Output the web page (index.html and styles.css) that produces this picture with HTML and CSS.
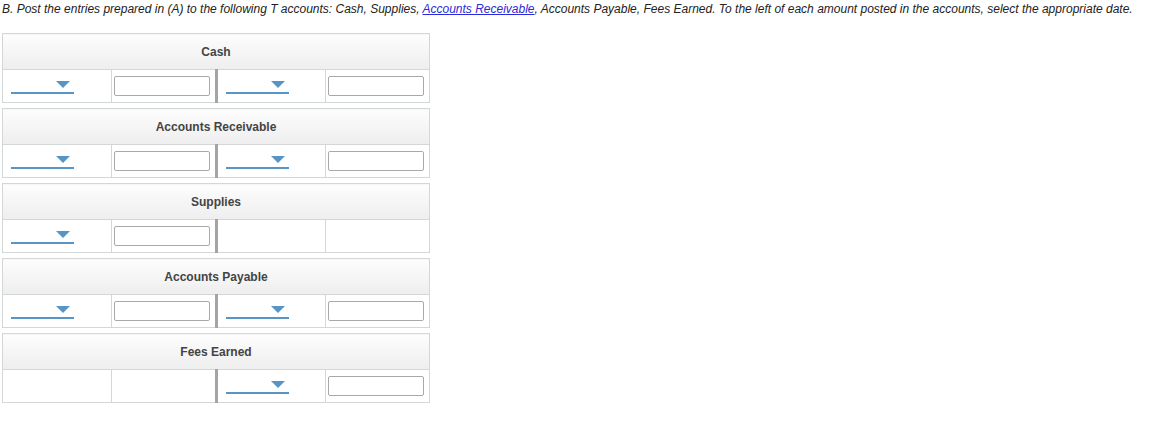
FILE: index.html
```html
<!DOCTYPE html>
<html lang="en">
  <head>
    <meta charset="UTF-8" />
    <title>T accounts</title>
    <link rel="stylesheet" href="styles.css">
  </head>
  <body>
    <p class="prompt">
      B. Post the entries prepared in (A) to the following T accounts: Cash, Supplies, <a href="#">Accounts Receivable</a>, Accounts Payable, Fees Earned. To the left of each amount posted in the accounts, select the appropriate date.
    </p>

    <table class="t-account">
      <colgroup><col class="c1"><col class="c2"><col class="c3"><col class="c4"></colgroup>
      <tr><th colspan="4">Cash</th></tr>
      <tr>
        <td><span class="select"></span></td>
        <td class="debit"><span class="field"></span></td>
        <td><span class="select"></span></td>
        <td><span class="field"></span></td>
      </tr>
    </table>

    <table class="t-account">
      <colgroup><col class="c1"><col class="c2"><col class="c3"><col class="c4"></colgroup>
      <tr><th colspan="4">Accounts Receivable</th></tr>
      <tr>
        <td><span class="select"></span></td>
        <td class="debit"><span class="field"></span></td>
        <td><span class="select"></span></td>
        <td><span class="field"></span></td>
      </tr>
    </table>

    <table class="t-account">
      <colgroup><col class="c1"><col class="c2"><col class="c3"><col class="c4"></colgroup>
      <tr><th colspan="4">Supplies</th></tr>
      <tr>
        <td><span class="select"></span></td>
        <td class="debit"><span class="field"></span></td>
        <td></td>
        <td></td>
      </tr>
    </table>

    <table class="t-account">
      <colgroup><col class="c1"><col class="c2"><col class="c3"><col class="c4"></colgroup>
      <tr><th colspan="4">Accounts Payable</th></tr>
      <tr>
        <td><span class="select"></span></td>
        <td class="debit"><span class="field"></span></td>
        <td><span class="select"></span></td>
        <td><span class="field"></span></td>
      </tr>
    </table>

    <table class="t-account">
      <colgroup><col class="c1"><col class="c2"><col class="c3"><col class="c4"></colgroup>
      <tr><th colspan="4">Fees Earned</th></tr>
      <tr>
        <td></td>
        <td class="debit"></td>
        <td><span class="select"></span></td>
        <td><span class="field"></span></td>
      </tr>
    </table>
  </body>
</html>
```

FILE: styles.css
```css
html, body {
  margin: 0;
  padding: 0;
}
body {
  padding: 3px 2px;
  font-family: 'Liberation Sans', Arial, sans-serif;
  color: #222;
  background: #fff;
}

.prompt {
  margin: 0 0 17px 0;
  font-size: 12px;
  font-style: italic;
  line-height: 13px;
  white-space: nowrap;
}
.prompt a {
  color: #2a2ad8;
}

.t-account {
  border-collapse: collapse;
  width: 427px;
  margin-bottom: 5px;
  table-layout: fixed;
}
.t-account col.c1 { width: 109px; }
.t-account col.c2 { width: 105px; }
.t-account col.c3 { width: 109px; }
.t-account col.c4 { width: 104px; }

.t-account th {
  height: 35px;
  padding: 0;
  border: 1px solid #d3d7d8;
  background: linear-gradient(to bottom, #fdfdfd, #eeeeee);
  color: #444;
  font-size: 12px;
  font-weight: bold;
  text-align: center;
}
.t-account td {
  height: 32px;
  padding: 0;
  border: 1px solid #d3d7d8;
  vertical-align: middle;
}
.t-account td.debit {
  border-right: 3px solid #a4a4a4;
}

.select {
  display: block;
  position: relative;
  width: 63px;
  height: 0;
  margin: 14px 0 0 8px;
  border-bottom: 2px solid #5795c6;
}
.select::after {
  content: '';
  position: absolute;
  right: 4px;
  bottom: 4px;
  border-left: 7px solid transparent;
  border-right: 7px solid transparent;
  border-top: 7px solid #5795c6;
}

.field {
  display: block;
  width: 94px;
  height: 18px;
  margin-left: 2px;
  border: 1px solid #a9a9a9;
  border-radius: 2px;
  background: #fff;
}
```
